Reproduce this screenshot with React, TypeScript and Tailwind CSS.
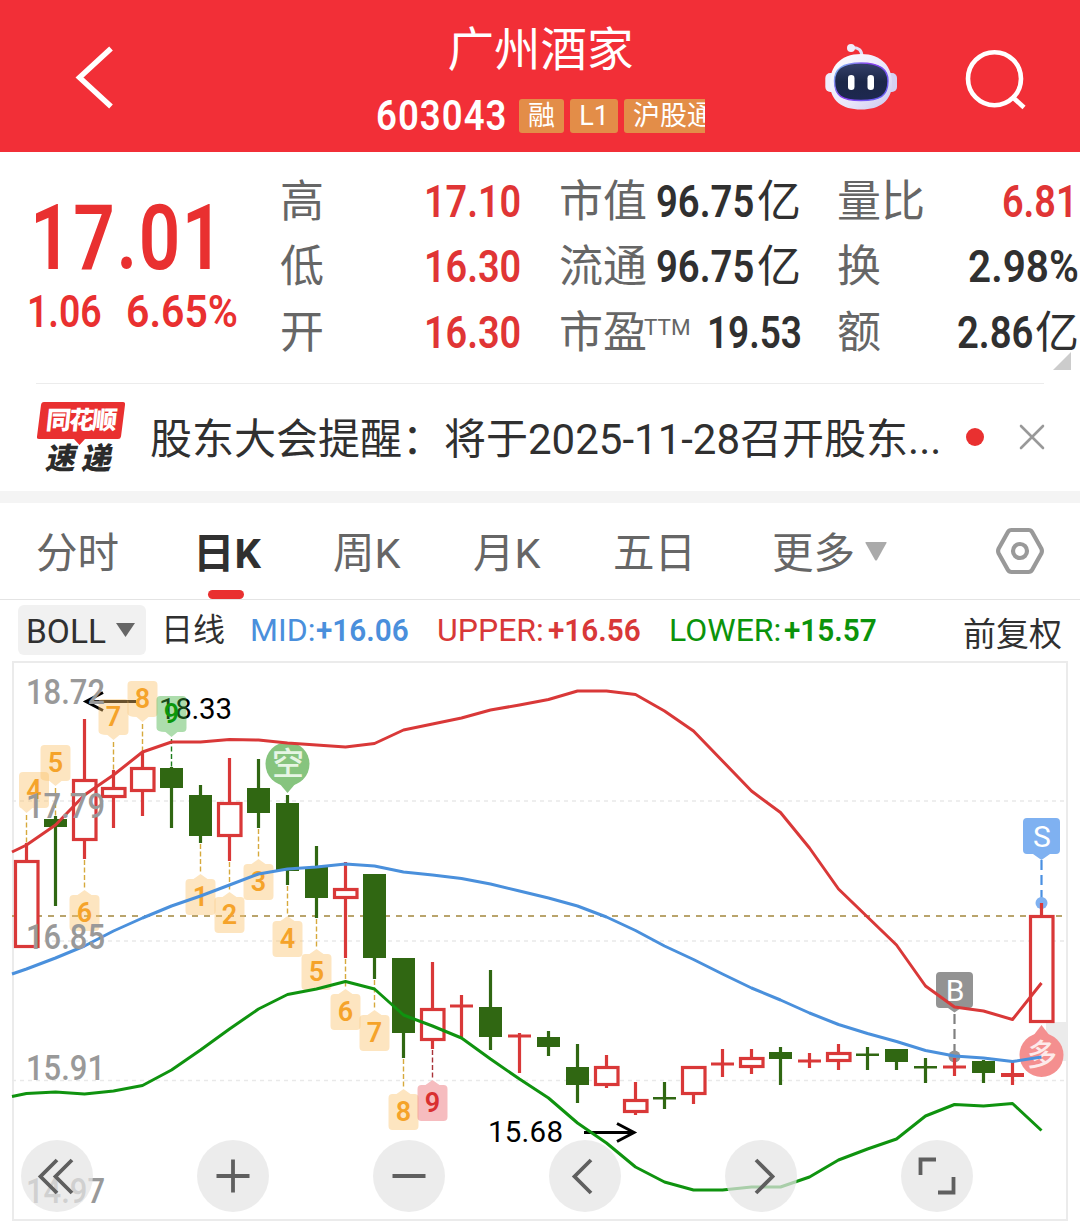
import React from "react";

const CJK = "font-['Roboto','Noto_Sans_CJK_SC',sans-serif]";

/* Narrow numerals: `box` is the drawn width, `fit` the horizontal scale. */
function Din({ children, box, fit }: { children: React.ReactNode; box: string; fit: string }) {
  return (
    <span className={`inline-block shrink-0 whitespace-nowrap font-semibold ${box}`}>
      <span className={`inline-block origin-left ${fit}`}>{children}</span>
    </span>
  );
}

function Header() {
  return (
    <header className="flex h-[152px] bg-[#f22f37] text-white">
      <div className="w-[376px] shrink-0 pl-[74px] pt-[44px]">
        <svg width="42" height="66" viewBox="0 0 42 66" fill="none" stroke="#fff" strokeWidth="5.4">
          <path d="M37 4.5 L5.5 33.5 L37 62.5" />
        </svg>
      </div>
      <div className="flex w-[329px] shrink-0 flex-col items-center overflow-hidden">
        <h1 className="mt-[20px] h-[60px] text-[46.5px] font-normal leading-[60px]">广州酒家</h1>
        <div className="mt-[16px] flex h-[40px] w-full items-center">
          <span className="text-[42px] leading-[40px]">
            <Din box="w-[143px]" fit="scale-x-[0.87] tracking-[1.2px]">603043</Din>
          </span>
          <div className="flex shrink-0 gap-[6px] text-[27px] leading-[34px]">
            <span className="h-[34px] w-[45px] rounded-[3px] bg-[#e38d48] text-center">融</span>
            <span className="h-[34px] w-[48px] rounded-[3px] bg-[#e38d48] text-center">L1</span>
            <span className="h-[34px] w-[100px] whitespace-nowrap rounded-[3px] bg-[#e38d48] pl-[9px]">沪股通</span>
          </div>
        </div>
      </div>
      <div className="pl-[119px] pt-[43px]">
        <svg width="74" height="69" viewBox="824 43 74 69">
          <defs>
            <linearGradient id="shell" x1="0" y1="0" x2="1" y2="1">
              <stop offset="0" stopColor="#ffffff" />
              <stop offset="0.6" stopColor="#e9e6fa" />
              <stop offset="1" stopColor="#c9c6ec" />
            </linearGradient>
            <linearGradient id="rim" x1="0" y1="0" x2="1" y2="0.6">
              <stop offset="0" stopColor="#7fd0f5" />
              <stop offset="0.5" stopColor="#8a3df0" />
              <stop offset="1" stopColor="#6a5cf2" />
            </linearGradient>
            <linearGradient id="visor" x1="0" y1="0" x2="0" y2="1">
              <stop offset="0" stopColor="#35406a" />
              <stop offset="0.5" stopColor="#1c2748" />
              <stop offset="1" stopColor="#1d2850" />
            </linearGradient>
          </defs>
          <path d="M852 47.5 Q862 47 862 57" fill="none" stroke="#e4e0f6" strokeWidth="3" />
          <circle cx="851" cy="48" r="4" fill="#f0edfb" />
          <rect x="825.3" y="73" width="12" height="19" rx="5" fill="#efedfb" />
          <rect x="885" y="73" width="12" height="19" rx="5" fill="#d5d1f2" />
          <path d="M861 54 C882 54 892 67 892 83 C892 101 880 109.500 861 109.500 C842 109.500 830 101 830 83 C830 67 840 54 861 54Z" fill="url(#shell)" />
          <path d="M861 63 C880 63 888 69 888 81 C888 96 880 100.500 861 100.500 C842 100.500 834.500 96 834.500 81 C834.500 69 842 63 861 63Z" fill="url(#visor)" stroke="url(#rim)" strokeWidth="1.4" />
          <rect x="848" y="75" width="6.500" height="15" rx="3.2" fill="#fff" />
          <rect x="867.500" y="75" width="6.500" height="15" rx="3.2" fill="#fff" />
        </svg>
      </div>
      <div className="pl-[66px] pt-[48px]">
        <svg width="64" height="64" viewBox="964 48 64 64" fill="none" stroke="#fff" strokeWidth="4.6">
          <circle cx="994.500" cy="78.700" r="26.500" />
          <path d="M1012.500 97 L1024 107.500" />
        </svg>
      </div>
    </header>
  );
}

function Stat({ label, children, sup }: { label: string; children: React.ReactNode; sup?: string }) {
  return (
    <div className="flex h-[65.500px] items-center justify-between">
      <span className="flex shrink-0 text-[#666666]">
        {label}
        {sup && <span className="-ml-[3px] mt-[12px] h-[30px] text-[22.500px] leading-[30px]">{sup}</span>}
      </span>
      <span className="flex shrink-0">{children}</span>
    </div>
  );
}

function Quote() {
  return (
    <section className="flex h-[231px] text-[44px] leading-[66px]">
      <div className="w-[280px] shrink-0 text-[#e93030]">
        <div className="mt-[36px] h-[100px] pl-[30px] text-[91px] leading-[100px]">
          <Din box="w-[200px]" fit="scale-x-[0.8] tracking-[2px]">17.01</Din>
        </div>
        <div className="mt-[-1px] flex h-[50px] pl-[27px] text-[45px] leading-[50px]">
          <Din box="w-[99px]" fit="scale-x-[0.83]">1.06</Din>
          <Din box="w-[120px]" fit="scale-x-[0.91]">6.65%</Din>
        </div>
      </div>
      <div className="mt-[17px] w-[243px] shrink-0 text-[#e03535]">
        <Stat label="高"><Din box="w-[99px]" fit="scale-x-[0.86]">17.10</Din></Stat>
        <Stat label="低"><Din box="w-[99px]" fit="scale-x-[0.86]">16.30</Din></Stat>
        <Stat label="开"><Din box="w-[99px]" fit="scale-x-[0.86]">16.30</Din></Stat>
      </div>
      <div className="ml-[36px] mt-[17px] w-[242px] shrink-0 text-[#303030]">
        <Stat label="市值"><Din box="w-[101px]" fit="scale-x-[0.87]">96.75</Din>亿</Stat>
        <Stat label="流通"><Din box="w-[101px]" fit="scale-x-[0.87]">96.75</Din>亿</Stat>
        <Stat label="市盈" sup="TTM"><Din box="w-[94px]" fit="scale-x-[0.84]">19.53</Din></Stat>
      </div>
      <div className="relative ml-[36px] mt-[17px] w-[242px] shrink-0 text-[#303030]">
        <Stat label="量比"><span className="text-[#e03535]"><Din box="w-[77px]" fit="scale-x-[0.86]">6.81</Din></span></Stat>
        <Stat label="换"><Din box="w-[111px]" fit="scale-x-[0.92]">2.98%</Din></Stat>
        <Stat label="额"><Din box="w-[78px]" fit="scale-x-[0.87]">2.86</Din>亿</Stat>
        <svg className="absolute left-[216px] top-[183px]" width="18" height="18" viewBox="0 0 18 18"><path d="M18 0V18H0Z" fill="#cccccc" /></svg>
      </div>
    </section>
  );
}

function News() {
  return (
    <section className="mx-[36px] flex h-[108px] items-center border-t border-[#ececec]">
      <div className="relative h-[74px] w-[90px] shrink-0">
        <svg className="absolute left-0 top-0" width="90" height="46" viewBox="0 0 90 46">
          <path d="M8 1H87Q89.500 1 89 4L85 35.500Q84.600 38 82 38H49L43.500 44L38 38H3Q0.500 38 1 35.500L5 4Q5.400 1 8 1Z" fill="#e93030" />
        </svg>
        <div className="absolute left-[10px] top-[3px] -skew-x-6 whitespace-nowrap text-[25px] font-black leading-[34px] tracking-[-2px] text-white">同花顺</div>
        <div className="absolute left-[11px] top-[41px] -skew-x-12 whitespace-nowrap text-[30px] font-black leading-[34px] tracking-[6px] text-[#2b2b2b]">速递</div>
      </div>
      <p className="ml-[24px] mt-[4px] w-[792px] shrink-0 whitespace-nowrap text-[42px] leading-[60px] text-[#303030]">股东大会提醒：将于2025-11-28召开股东...</p>
      <span className="-mt-[2px] ml-[24px] h-[18px] w-[18px] shrink-0 rounded-full bg-[#e93030]" />
      <svg className="-mt-[2px] ml-[35px] shrink-0" width="26" height="26" viewBox="0 0 26 26" stroke="#999" strokeWidth="2.6" strokeLinecap="round"><path d="M2 2L24 24M24 2L2 24" /></svg>
    </section>
  );
}

function Tabs() {
  return (
    <nav className="flex h-[97px] items-start border-b border-[#e4e4e4] pl-[36px] pt-[21px] text-[41.500px] leading-[60px] text-[#666666]">
      <span className="w-[157px] shrink-0">分时</span>
      <span className="relative w-[140px] shrink-0 font-bold text-[#303030]">
        日K
        <i className="absolute left-[15px] top-[66px] h-[9px] w-[36px] rounded-full bg-[#e93030]" />
      </span>
      <span className="w-[140px] shrink-0">周K</span>
      <span className="w-[140px] shrink-0">月K</span>
      <span className="w-[159px] shrink-0">五日</span>
      <span className="flex w-[223px] shrink-0 items-center">
        更多
        <svg className="-mt-[6px] ml-[10px]" width="22" height="19" viewBox="0 0 22 19"><path d="M1 0H21Q22 0 21.500 1L12 18Q11 19 10 18L0.500 1Q0 0 1 0Z" fill="#aaaaaa" /></svg>
      </span>
      <svg className="mt-[3px] shrink-0" width="50" height="48" viewBox="0 0 50 48" fill="none" stroke="#999" strokeLinejoin="round">
        <path d="M16.500 3H33.500Q36 3 37.200 5.200L46.300 21.500Q47.500 24 46.300 26.500L37.200 42.800Q36 45 33.500 45H16.500Q14 45 12.800 42.800L3.700 26.500Q2.500 24 3.700 21.500L12.800 5.200Q14 3 16.500 3Z" strokeWidth="4.200" />
        <circle cx="25" cy="24" r="7" strokeWidth="4.200" />
      </svg>
    </nav>
  );
}

function Indicator() {
  return (
    <div className="flex h-[61px] items-start pl-[18px] text-[32px] leading-[48px] text-[#303030]">
      <div className="mt-[5px] flex h-[50px] w-[128px] shrink-0 items-center rounded-[6px] bg-[#f1f1f1] pl-[8px] pt-[3px]">
        <span className="w-[81px] text-[33.500px]">BOLL</span>
        <svg className="-mt-[4px] ml-[9px]" width="19" height="14" viewBox="0 0 19 14"><path d="M0 0H19L9.500 14Z" fill="#666" /></svg>
      </div>
      <span className="ml-[15px] mt-[6px] w-[89px] shrink-0">日线</span>
      <span className="mt-[6px] flex w-[187px] shrink-0 text-[#4a8fdc]">
        <span className="w-[66px]">MID:</span><Din box="w-[92px]" fit="scale-x-[0.93]">+16.06</Din>
      </span>
      <span className="mt-[6px] flex w-[232px] shrink-0 text-[#d83838]">
        <span className="w-[111px]">UPPER:</span><Din box="w-[92px]" fit="scale-x-[0.93]">+16.56</Din>
      </span>
      <span className="mt-[6px] flex w-[294px] shrink-0 text-[#0b930b]">
        <span className="w-[115px]">LOWER:</span><Din box="w-[92px]" fit="scale-x-[0.93]">+15.57</Din>
      </span>
      <span className="mt-[11px] shrink-0 text-[33px]">前复权</span>
    </div>
  );
}

const RED = "#d93838";
const GREEN = "#306712";
const cx = (i: number) => 26.5 + 29 * i;

/* kind, high, body top, body bottom, low */
type Candle = ["r" | "g", number, number, number, number];
const candles: Candle[] = [
  ["r", 843, 860, 948, 948], ["g", 816, 819, 827, 906], ["r", 719, 779, 841, 859], ["r", 770, 787, 798, 828],
  ["r", 752, 767, 792, 816], ["g", 767, 768, 788, 828], ["g", 785, 795, 836, 843], ["r", 758, 802, 837, 861],
  ["g", 759, 788, 813, 828], ["g", 795, 803, 871, 885], ["g", 846, 867, 898, 918], ["r", 862, 888, 899, 958],
  ["g", 874, 874, 958, 979], ["g", 958, 958, 1033, 1058], ["r", 962, 1008, 1041, 1049], ["r", 995, 1004.5, 1007.5, 1037],
  ["g", 970, 1007, 1037, 1050], ["r", 1033, 1034.5, 1037.5, 1073], ["g", 1031, 1037, 1047, 1056], ["g", 1044, 1067, 1085, 1103],
  ["r", 1055, 1066, 1086, 1088], ["r", 1082, 1099, 1113, 1115], ["g", 1082, 1097, 1099.5, 1109], ["r", 1066, 1066, 1095, 1104],
  ["r", 1049, 1062.5, 1065.5, 1077], ["r", 1049, 1057, 1068, 1074], ["g", 1047, 1052, 1059, 1085], ["r", 1053, 1059.5, 1062.5, 1068],
  ["r", 1044, 1052, 1062, 1070], ["g", 1047, 1053.5, 1056, 1070], ["g", 1049, 1049, 1062, 1070], ["g", 1058, 1066, 1068.5, 1083],
  ["r", 1058, 1065.5, 1068.5, 1076], ["g", 1060, 1061, 1073, 1083], ["r", 1062, 1073, 1077, 1085], ["r", 903, 915, 1023, 1023],
];

const upper = [845, 825, 795, 775, 752, 742, 742, 739.5, 740, 743, 745, 747, 743.5, 730, 724, 718, 710, 705, 699.5, 691, 691, 694.5, 711, 731, 761, 791, 812.5, 848, 889, 917, 945, 986, 1007, 1011, 1019.5, 983];
const mid = [969, 958, 946, 931, 918, 906, 896, 885, 874, 869, 867, 864, 866, 872, 875, 878.5, 884, 891, 898, 906, 917, 930.5, 946, 959.5, 974, 988, 1000, 1013, 1024.5, 1033.5, 1041.5, 1050.5, 1056, 1058, 1061.5, 1057];
const lower = [1093.5, 1092, 1094, 1091, 1085.5, 1070, 1050, 1029, 1009, 994.5, 989, 981.5, 989, 1015, 1026, 1038, 1059, 1079, 1098, 1123, 1143, 1167, 1182, 1190, 1190, 1187, 1187, 1177, 1160, 1149, 1139, 1116, 1104.5, 1106, 1103.5, 1130.5];
const line = (start: number, ys: number[]) => `12,${start} ` + ys.map((y, i) => `${cx(i)},${y}`).join(" ");

/* candle index, digit, tone, box x shift */
const below: [number, string, "o" | "r"][] = [
  [2, "6", "o"], [6, "1", "o"], [7, "2", "o"], [8, "3", "o"], [9, "4", "o"], [10, "5", "o"], [11, "6", "o"], [12, "7", "o"], [13, "8", "o"], [14, "9", "r"],
];
const above: [number, string, "o" | "g", number][] = [[0, "4", "o", 7.5], [1, "5", "o", 0], [3, "7", "o", 0], [4, "8", "o", 0], [5, "9", "g", 0]];
const tones = {
  o: { fill: "#fbc06a", text: "#f5a32a", dash: "#d6a93c" },
  r: { fill: "#ea5f66", text: "#d93030", dash: "#a83238" },
  g: { fill: "#3cae3c", text: "#0b970b", dash: "#1c7d1c" },
};

function Marker({ x, tip, digit, tone, up, shift = 0 }: { x: number; tip: number; digit: string; tone: "o" | "r" | "g"; up: boolean; shift?: number }) {
  const t = tones[tone];
  const top = up ? tip + 5 : tip - 41;
  const l = x - 15 + shift;
  return (
    <g>
      <path
        fill={t.fill}
        opacity={0.42}
        d={
          up
            ? `M${l + 4} ${top}H${x - 7}L${x} ${tip}L${x + 7} ${top}H${l + 26}Q${l + 30} ${top} ${l + 30} ${top + 4}V${top + 32}Q${l + 30} ${top + 36} ${l + 26} ${top + 36}H${l + 4}Q${l} ${top + 36} ${l} ${top + 32}V${top + 4}Q${l} ${top} ${l + 4} ${top}Z`
            : `M${l + 4} ${top}H${l + 26}Q${l + 30} ${top} ${l + 30} ${top + 4}V${top + 32}Q${l + 30} ${top + 36} ${l + 26} ${top + 36}H${x + 6}L${x} ${tip}L${Math.max(x - 6, l + 2)} ${top + 36}Q${l} ${top + 36} ${l} ${top + 32}V${top + 4}Q${l} ${top} ${l + 4} ${top}Z`
        }
      />
      <text x={x + shift} y={top + 27} textAnchor="middle" fontSize="27" fontWeight="600" fill={t.text}>{digit}</text>
    </g>
  );
}

function Chart() {
  return (
    <svg className="block" width="1080" height="560" viewBox="0 661 1080 560" fontFamily="Roboto, 'Noto Sans CJK SC', sans-serif">
      <rect x="1046" y="1022" width="21" height="39" fill="#ebebeb" />
      <rect x="13" y="662" width="1054" height="558" fill="none" stroke="#ebebeb" strokeWidth="2" />
      <g stroke="#e9e9e9" strokeWidth="1.6" strokeDasharray="4 4">
        <path d="M12 801H1066M12 941H1066M12 1080.500H1066" />
      </g>
      <path d="M12 916H1066" stroke="#b9a46c" strokeWidth="1.8" strokeDasharray="6 6" />

      <g fontSize="29.500" fill="#000">
        <text x="159" y="719" textLength="73">18.33</text>
        <text x="488" y="1142" textLength="75">15.68</text>
      </g>
      <g fill="none" stroke="#000" strokeWidth="3">
        <path d="M136 701.500H86M103 692.500L86 701.500L103 710.500" />
        <path d="M584 1132.500H634M617 1123.500L634 1132.500L617 1141.500" />
      </g>

      {below.map(([i, d, tone]) => (
        <g key={i}>
          <path d={`M${cx(i)} ${candles[i][4] + 1}V${candles[i][4] + 29}`} stroke={tones[tone].dash} strokeWidth="1.400" strokeDasharray="5 2.500" />
          <Marker x={cx(i)} tip={candles[i][4] + 31} digit={d} tone={tone} up />
        </g>
      ))}
      {above.map(([i, d, tone, shift]) => (
        <g key={i}>
          <path d={`M${cx(i)} ${candles[i][1] - 28}V${candles[i][1]}`} stroke={tones[tone].dash} strokeWidth="1.400" strokeDasharray="5 2.500" />
          <Marker x={cx(i)} tip={candles[i][1] - 30} digit={d} tone={tone} up={false} shift={shift} />
        </g>
      ))}

      <g>
        <circle cx="287.500" cy="764" r="22" fill="#86c47e" />
        <path d="M279 783L287.500 793L296 783Z" fill="#86c47e" />
        <text x="288" y="775" textAnchor="middle" fontSize="32" fontWeight="500" fill="#e6f5e4">空</text>
      </g>
      <g>
        <path d="M1023 818H1056Q1060 818 1060 822V850Q1060 854 1056 854H1050L1041.500 860L1033 854H1027Q1023 854 1023 850V822Q1023 818 1027 818Z" fill="#7fb1f1" />
        <text x="1042" y="847" textAnchor="middle" fontSize="30" fill="#fff">S</text>
        <path d="M1041.500 860V900" stroke="#4a90e2" strokeWidth="2.200" strokeDasharray="10 5" />
        <circle cx="1041.500" cy="903" r="6" fill="#7fb1f1" />
      </g>
      <g>
        <path d="M940 972H969Q973 972 973 976V1004Q973 1008 969 1008H961L954.500 1012.500L948 1008H940Q936 1008 936 1004V976Q936 972 940 972Z" fill="#939393" />
        <text x="955" y="1000.500" textAnchor="middle" fontSize="30" fill="#fff">B</text>
        <path d="M954.500 1014V1054" stroke="#808080" strokeWidth="2.200" strokeDasharray="10 5" />
        <circle cx="954.500" cy="1056.500" r="6" fill="#939393" />
      </g>

      {candles.map(([kind, high, top, bottom, low], i) => {
        const x = cx(i);
        const color = kind === "r" ? RED : GREEN;
        const hollow = kind === "r" && bottom - top > 5;
        return (
          <g key={i}>
            {high < top && <path d={`M${x} ${high}V${top + 1}`} stroke={color} strokeWidth="3.200" />}
            {low > bottom && <path d={`M${x} ${bottom - 1}V${low}`} stroke={color} strokeWidth="3.200" />}
            {hollow ? (
              <rect x={x - 11} y={top + 1.5} width="22.500" height={bottom - top - 3} fill="#fff" stroke={color} strokeWidth="3.200" />
            ) : (
              <rect x={x - 11.5} y={top} width="23" height={bottom - top} fill={color} />
            )}
          </g>
        );
      })}

      <g>
        <circle cx="1041.500" cy="1055" r="22" fill="#f48f8f" />
        <path d="M1033 1036L1041.500 1025L1050 1036Z" fill="#f48f8f" />
        <text x="1042" y="1065" textAnchor="middle" fontSize="30" fontWeight="500" fill="#fdeaea">多</text>
      </g>
      <g fill="none" strokeWidth="3" strokeLinejoin="round">
        <polyline points={line(852, upper)} stroke={RED} />
        <polyline points={line(974, mid)} stroke="#4a90dc" />
        <polyline points={line(1096.5, lower)} stroke="#0f930f" />
      </g>

      <g fontSize="35" fontWeight="500" fill="#999999">
        <text x="26" y="704" textLength="79" lengthAdjust="spacingAndGlyphs">18.72</text>
        <text x="26" y="818" textLength="79" lengthAdjust="spacingAndGlyphs">17.79</text>
        <text x="26" y="949" textLength="79" lengthAdjust="spacingAndGlyphs">16.85</text>
        <text x="26" y="1080" textLength="79" lengthAdjust="spacingAndGlyphs">15.91</text>
        <text x="26" y="1203" textLength="79" lengthAdjust="spacingAndGlyphs">14.97</text>
      </g>

      <g fill="#e5e5e5" fillOpacity="0.72">
        {[57, 233, 409, 585, 761, 937].map((x) => <circle key={x} cx={x} cy="1176" r="36" />)}
      </g>
      <g fill="none" stroke="#5f5f5f" strokeWidth="3.800">
        <path d="M57 1160L40.500 1176.500L57 1193M72 1160L55.500 1176.500L72 1193" />
        <path d="M216.500 1176H249.500M233 1159.500V1192.500M392.500 1176H425.500" />
        <path d="M591 1160L574.500 1176.500L591 1193M756 1160L772.500 1176.500L756 1193" />
        <path d="M936 1159.500H920.500V1175M953.500 1177V1192.500H938" />
      </g>
    </svg>
  );
}

export default function App() {
  return (
    <main className={`h-[1221px] w-[1080px] overflow-hidden bg-white ${CJK}`}>
      <Header />
      <Quote />
      <News />
      <div className="h-[12px] bg-[#f4f4f4]" />
      <Tabs />
      <Indicator />
      <Chart />
    </main>
  );
}
